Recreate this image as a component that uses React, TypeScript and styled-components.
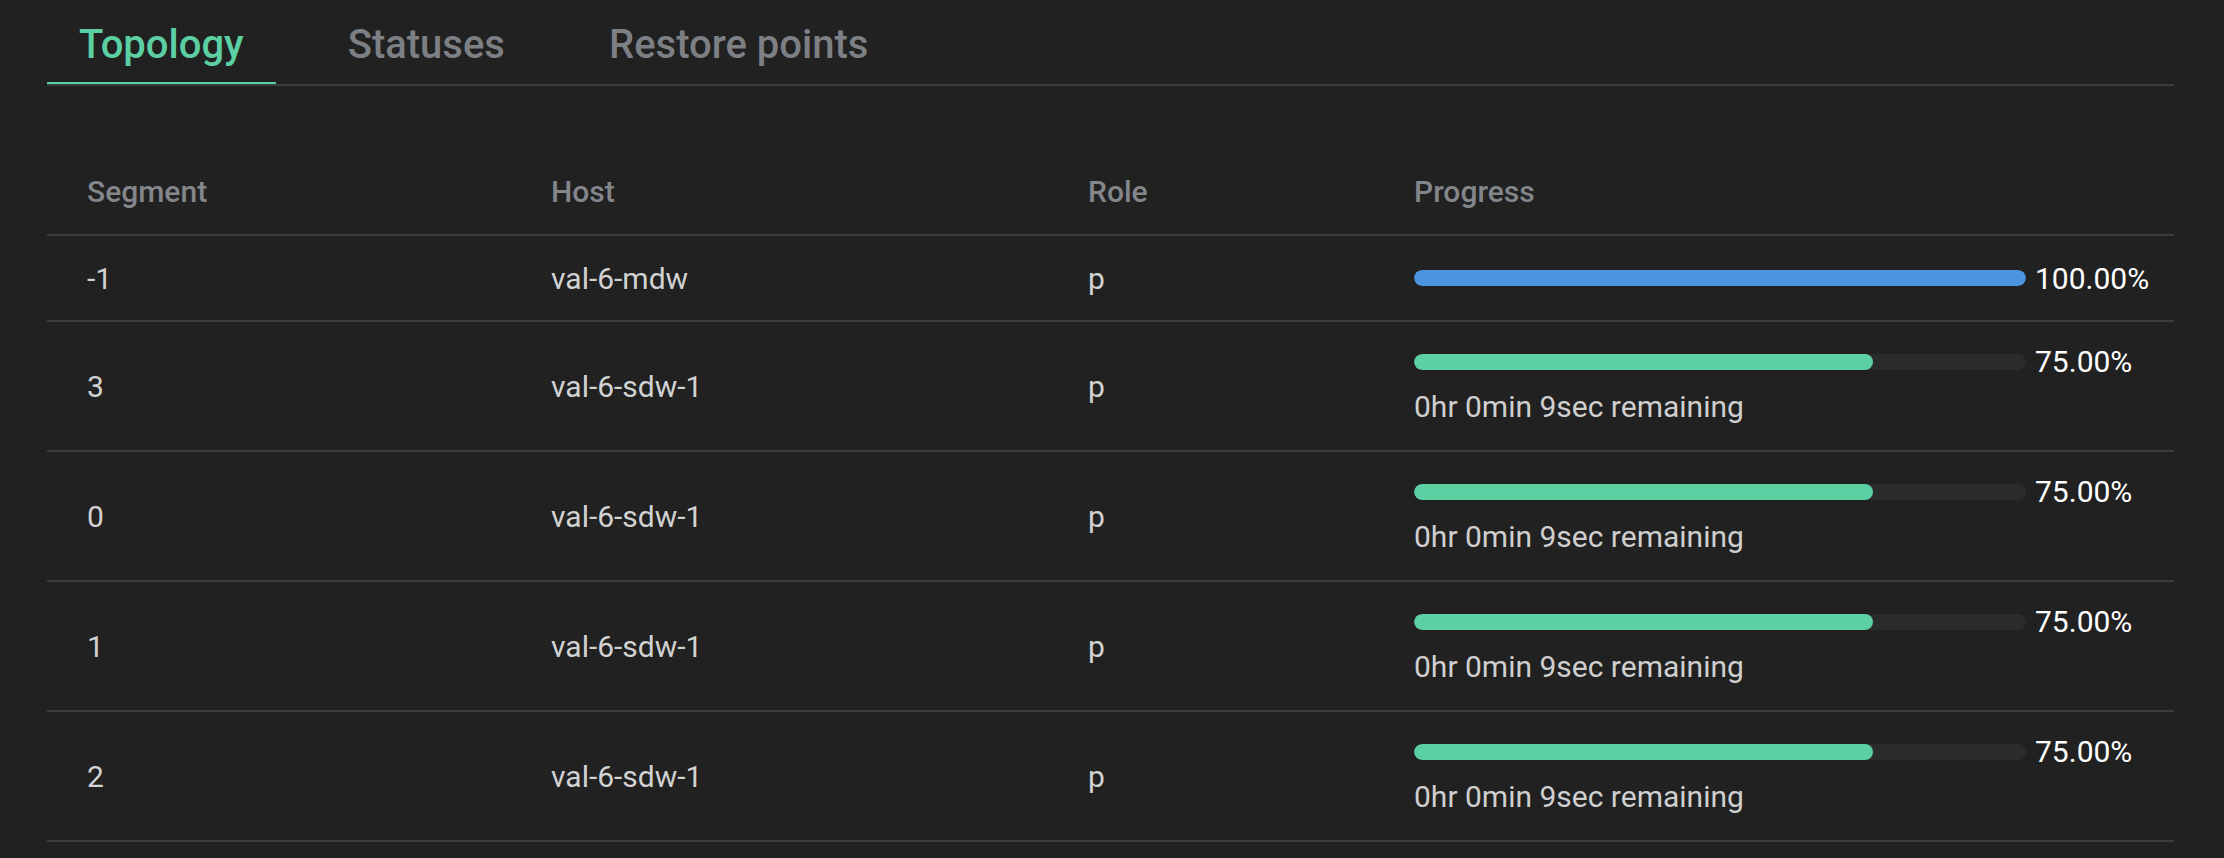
import styled, { createGlobalStyle } from 'styled-components';

type Row = {
    segment: string;
    host: string;
    role: string;
    progress: number;
    remaining?: string;
};

const rows: Row[] = [
    { segment: '-1', host: 'val-6-mdw', role: 'p', progress: 100 },
    { segment: '3', host: 'val-6-sdw-1', role: 'p', progress: 75, remaining: '0hr 0min 9sec remaining' },
    { segment: '0', host: 'val-6-sdw-1', role: 'p', progress: 75, remaining: '0hr 0min 9sec remaining' },
    { segment: '1', host: 'val-6-sdw-1', role: 'p', progress: 75, remaining: '0hr 0min 9sec remaining' },
    { segment: '2', host: 'val-6-sdw-1', role: 'p', progress: 75, remaining: '0hr 0min 9sec remaining' },
];

const tabs = ['Topology', 'Statuses', 'Restore points'];

export default function App() {
    return (
        <>
            <GlobalStyle />
            <Page>
                <TabList>
                    {tabs.map((t, i) => (
                        <Tab key={t} $active={i === 0}>{t}</Tab>
                    ))}
                </TabList>
                <Table>
                    <HeaderRow>
                        <HeadCell>Segment</HeadCell>
                        <HeadCell>Host</HeadCell>
                        <HeadCell>Role</HeadCell>
                        <HeadCell>Progress</HeadCell>
                    </HeaderRow>
                    {rows.map((r, i) => (
                        <BodyRow key={i} $tall={!!r.remaining}>
                            <Cell>{r.segment}</Cell>
                            <Cell>{r.host}</Cell>
                            <Cell>{r.role}</Cell>
                            <ProgressCell>
                                <BarLine>
                                    <Track>
                                        <Fill $done={r.progress >= 100} style={{ width: `${r.progress}%` }} />
                                    </Track>
                                    <Percent>{r.progress.toFixed(2)}%</Percent>
                                </BarLine>
                                {r.remaining && <Remaining>{r.remaining}</Remaining>}
                            </ProgressCell>
                        </BodyRow>
                    ))}
                </Table>
            </Page>
        </>
    );
}

const GlobalStyle = createGlobalStyle`
  html, body {
    margin: 0;
    padding: 0;
    background: #212121;
  }
  body {
    font-family: Roboto, "Liberation Sans", sans-serif;
    color: #d2d2d2;
  }
`;

const Page = styled.div`
  margin: 0 50px 0 47px;
  min-height: 858px;
`;

const TabList = styled.div`
  display: flex;
  gap: 40px;
  border-bottom: 2px solid #3a3d42;
`;

const Tab = styled.div<{ $active?: boolean }>`
  padding: 21px 32px 13px;
  font-size: 40px;
  line-height: 48px;
  font-weight: 500;
  color: ${p => (p.$active ? '#5ccfa3' : '#7c7f83')};
  border-bottom: 2px solid ${p => (p.$active ? '#5ccfa3' : 'transparent')};
`;

const Table = styled.div`
  margin-top: 63px;
`;

const Grid = styled.div`
  display: grid;
  grid-template-columns: 464px 537px 326px 1fr;
  align-items: center;
  border-bottom: 2px solid #3a3d42;
`;

const HeaderRow = styled(Grid)`
  height: 85px;
`;

const BodyRow = styled(Grid)<{ $tall?: boolean }>`
  height: ${p => (p.$tall ? '128px' : '84px')};
`;

const HeadCell = styled.div`
  padding-left: 40px;
  font-size: 30px;
  font-weight: 500;
  color: #83868a;
`;

const Cell = styled.div`
  padding-left: 40px;
  font-size: 30px;
  color: #d2d2d2;
`;

const ProgressCell = styled.div`
  padding-left: 40px;
  display: flex;
  flex-direction: column;
  gap: 9px;
`;

const BarLine = styled.div`
  display: flex;
  align-items: center;
  gap: 9px;
  height: 32px;
`;

const Track = styled.div`
  width: 612px;
  height: 16px;
  border-radius: 8px;
  background: #2a2c2c;
  overflow: hidden;
`;

const Fill = styled.div<{ $done?: boolean }>`
  height: 100%;
  border-radius: 8px;
  background: ${p => (p.$done ? '#4a94e0' : '#5ccfa3')};
`;

const Percent = styled.span`
  font-size: 30px;
  color: #ffffff;
`;

const Remaining = styled.div`
  font-size: 30px;
  line-height: 40px;
  color: #cfcfcf;
`;
